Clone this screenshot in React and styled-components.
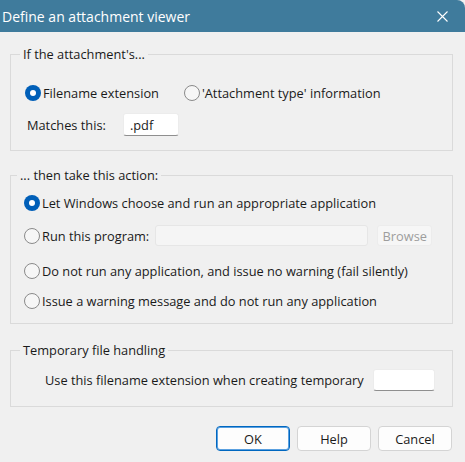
import React from "react";
import styled, { createGlobalStyle } from "styled-components";

const Global = createGlobalStyle`
  html, body { margin: 0; padding: 0; background: #f0f0f0; }
  body { font-family: "Open Sans", "Noto Sans", sans-serif; font-size: 12px; color: #1a1a1a; }
  * { box-sizing: border-box; }
`;

const Window = styled.div`
  width: 465px;
  height: 462px;
  background: #f0f0f0;
  border-top-right-radius: 8px;
  overflow: hidden;
  display: flex;
  flex-direction: column;
`;

const TitleBar = styled.div`
  height: 32px;
  background: #3f7b9c;
  color: #fff;
  display: flex;
  align-items: center;
  justify-content: space-between;
  padding: 0 17px 0 2px;
  font-size: 14px;
`;

const Body = styled.div`
  padding: 14px 12px 0 10px;
  display: flex;
  flex-direction: column;
`;

const Group = styled.fieldset`
  margin: ${(p) => p.$top || 0}px 0 0 0;
  padding: 0;
  border: 1px solid #dadada;
  min-width: 0;
`;

const Legend = styled.legend`
  margin-left: ${(p) => p.$indent || 9}px;
  padding: 0 3px;
  line-height: 16px;
  font-size: 12.8px;
`;

const Inner = styled.div`
  display: flex;
  flex-direction: column;
  padding: ${(p) => p.$pad};
`;

const Row = styled.div`
  display: flex;
  align-items: center;
  height: ${(p) => p.$h || 20}px;
  margin-top: ${(p) => p.$mt || 0}px;
  padding-left: ${(p) => p.$pl || 0}px;
`;

const RadioDot = styled.span`
  width: 16px;
  height: 16px;
  border-radius: 50%;
  flex: none;
  margin-right: 2px;
  border: ${(p) => (p.$on ? "none" : "1px solid #8a8a8a")};
  background: ${(p) => (p.$on ? "#005fb8" : "#f6f6f6")};
  display: flex;
  align-items: center;
  justify-content: center;
  &::after {
    content: "";
    display: ${(p) => (p.$on ? "block" : "none")};
    width: 6px;
    height: 6px;
    border-radius: 50%;
    background: #fff;
  }
`;

const Label = styled.span`
  font-size: 12.8px;
  white-space: nowrap;
`;

const Radio = ({ on, children, style }) => (
  <Row as="label" style={style}>
    <RadioDot $on={on} />
    <Label>{children}</Label>
  </Row>
);

const TextBox = styled.div`
  width: ${(p) => p.$w}px;
  height: ${(p) => p.$h || 23}px;
  background: ${(p) => (p.$disabled ? "#f5f5f5" : "#ffffff")};
  border: 1px solid ${(p) => (p.$disabled ? "#e6e6e6" : "#ececec")};
  border-bottom-color: ${(p) => (p.$disabled ? "#e6e6e6" : "#8f8f8f")};
  border-radius: 3px;
  padding: 0 6px;
  display: flex;
  align-items: center;
  font-size: 12.8px;
  margin-left: ${(p) => p.$ml || 0}px;
  flex: none;
`;

const SmallButton = styled.div`
  width: 55px;
  height: 21px;
  margin-left: 9px;
  background: #f6f6f6;
  border: 1px solid #ececec;
  border-radius: 3px;
  color: #9d9d9d;
  display: flex;
  align-items: center;
  justify-content: center;
  font-size: 12.8px;
`;

const Buttons = styled.div`
  display: flex;
  justify-content: flex-end;
  gap: 7px;
  margin-top: 19px;
  padding-right: 1px;
`;

const Button = styled.div`
  width: 74px;
  height: 25px;
  background: #fdfdfd;
  border: 1px solid ${(p) => (p.$default ? "#0067c0" : "#d4d4d4")};
  box-shadow: ${(p) => (p.$default ? "inset 0 0 0 1px #5aa0e0" : "none")};
  border-radius: 4px;
  display: flex;
  align-items: center;
  justify-content: center;
  font-size: 12.8px;
`;

const CloseIcon = () => (
  <svg width="11" height="11" viewBox="0 0 11 11">
    <path d="M0.5 0.5 L10.5 10.5 M10.5 0.5 L0.5 10.5" stroke="#fff" strokeWidth="1.1" />
  </svg>
);

export default function App() {
  return (
    <Window>
      <Global />
      <TitleBar>
        <span>Define an attachment viewer</span>
        <CloseIcon />
      </TitleBar>
      <Body>
        <Group>
          <Legend $indent={9}>If the attachment's...</Legend>
          <Inner $pad="21px 0 14px 14px">
            <Row>
              <Radio on>Filename extension</Radio>
              <Radio style={{ marginLeft: 25 }}>'Attachment type' information</Radio>
            </Row>
            <Row $h={23} $mt={10} $pl={2}>
              <Label>Matches this:</Label>
              <TextBox $w={56} $ml={17}>.pdf</TextBox>
            </Row>
          </Inner>
        </Group>

        <Group $top={16}>
          <Legend $indent={6}>... then take this action:</Legend>
          <Inner $pad="10px 0 12px 13px">
            <Radio on>Let Windows choose and run an appropriate application</Radio>
            <Row $h={21} $mt={12}>
              <Radio>Run this program:</Radio>
              <TextBox $w={213} $h={21} $ml={6} $disabled />
              <SmallButton>Browse</SmallButton>
            </Row>
            <Radio style={{ marginTop: 15 }}>
              Do not run any application, and issue no warning (fail silently)
            </Radio>
            <Radio style={{ marginTop: 10 }}>
              Issue a warning message and do not run any application
            </Radio>
          </Inner>
        </Group>

        <Group $top={18}>
          <Legend $indent={9}>Temporary file handling</Legend>
          <Inner $pad="11px 0 15px 34px">
            <Row $h={22}>
              <Label>Use this filename extension when creating temporary</Label>
              <TextBox $w={62} $h={22} $ml={9} />
            </Row>
          </Inner>
        </Group>

        <Buttons>
          <Button $default>OK</Button>
          <Button>Help</Button>
          <Button>Cancel</Button>
        </Buttons>
      </Body>
    </Window>
  );
}
